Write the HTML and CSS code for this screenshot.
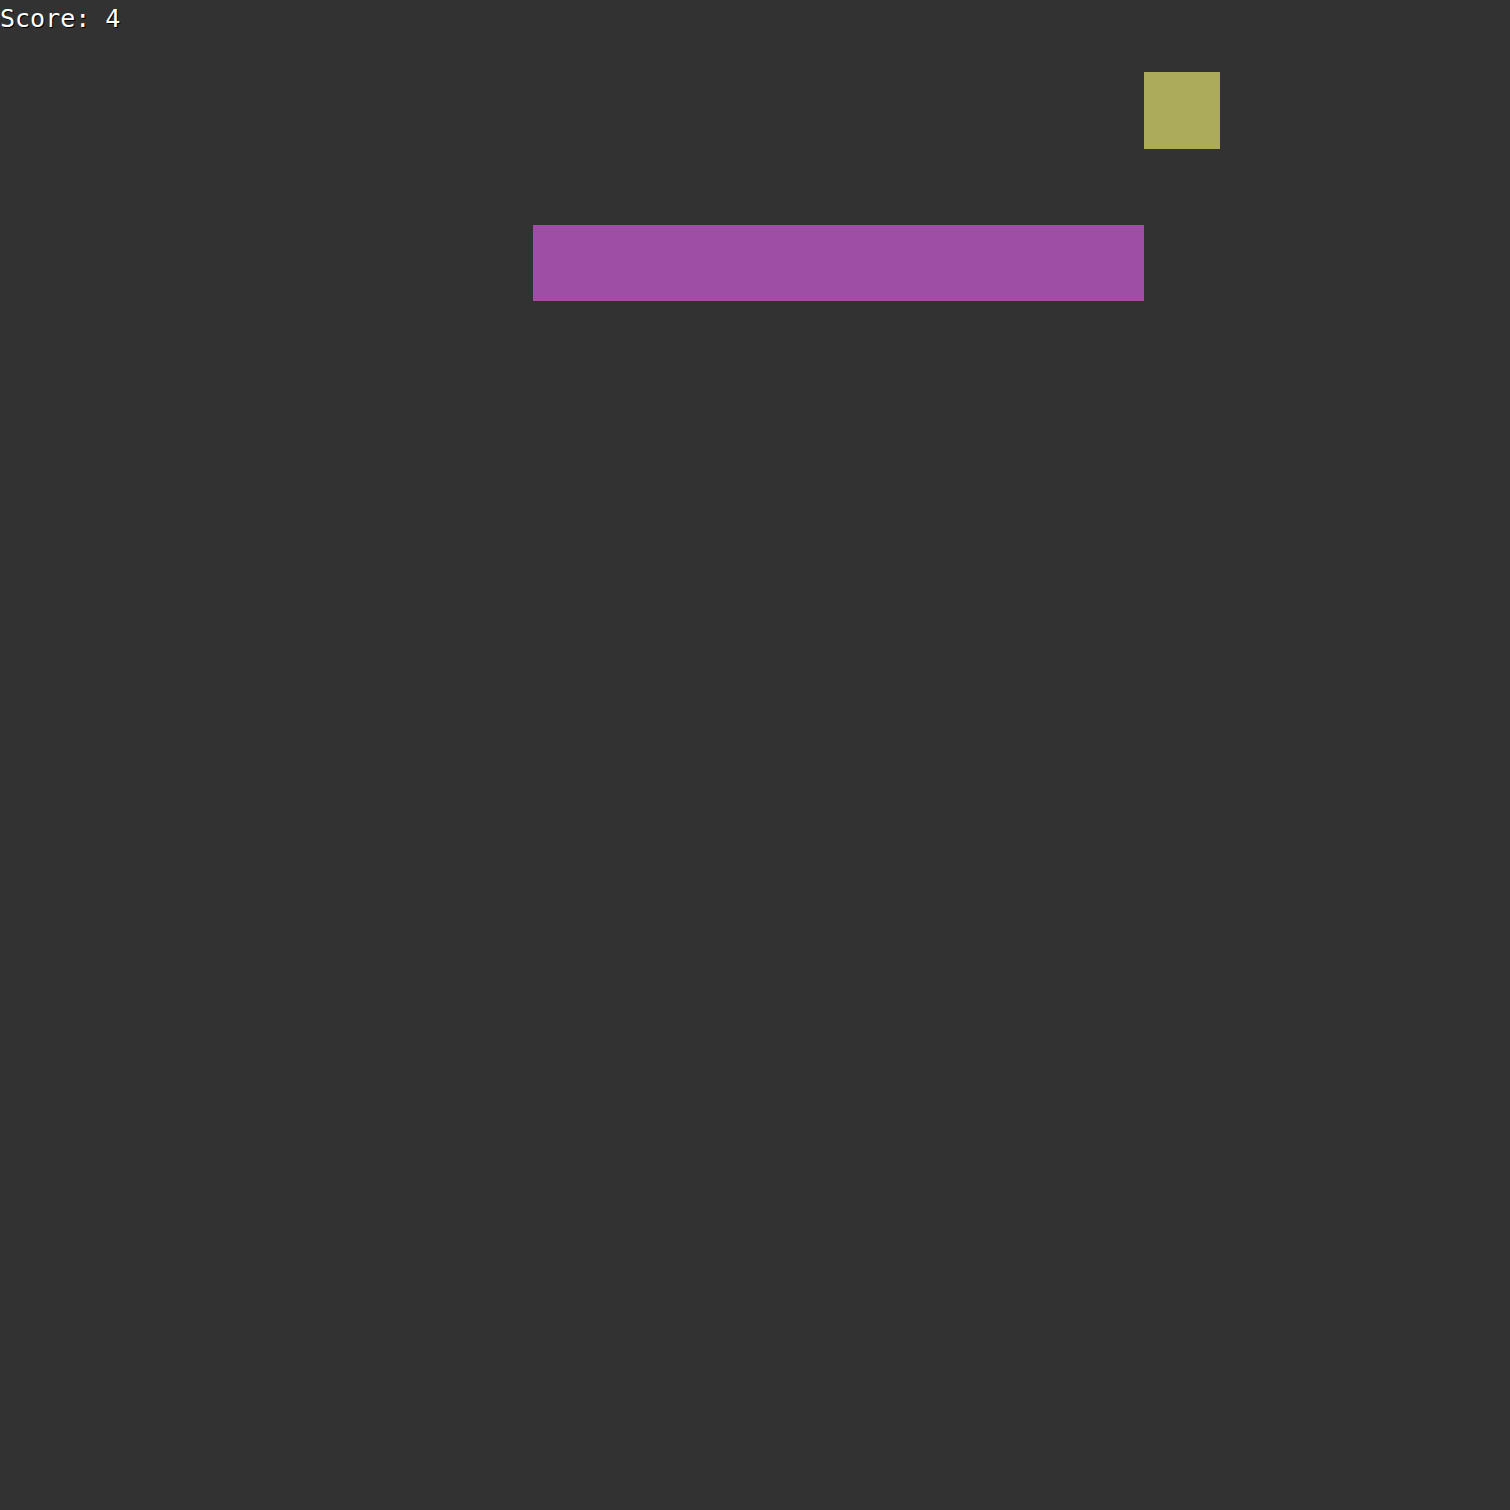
FILE: index.html
```html
<!DOCTYPE html>
<html>
<head>
<meta charset="utf-8">
<link rel="stylesheet" href="styles.css">
</head>
<body>
<div class="board">
  <div class="score">Score: 4</div>
  <div class="food"></div>
  <div class="snake"></div>
</div>
</body>
</html>
```
FILE: styles.css
```css
html, body {
  margin: 0;
  padding: 0;
  background: #323232;
}
.board {
  position: relative;
  width: 1510px;
  height: 1510px;
  background: #323232;
  overflow: hidden;
}
.score {
  position: absolute;
  left: 0;
  top: 2px;
  font-family: "DejaVu Sans Mono", "Liberation Mono", monospace;
  font-size: 25px;
  line-height: 34px;
  color: #ffffff;
  text-shadow: 1px 1px 0 #000000;
  -webkit-font-smoothing: none;
}
.food {
  position: absolute;
  left: 1144px;
  top: 72px;
  width: 76px;
  height: 77px;
  background: #abab5b;
}
.snake {
  position: absolute;
  left: 533px;
  top: 225px;
  width: 611px;
  height: 76px;
  background: #9e4fa5;
}
```
